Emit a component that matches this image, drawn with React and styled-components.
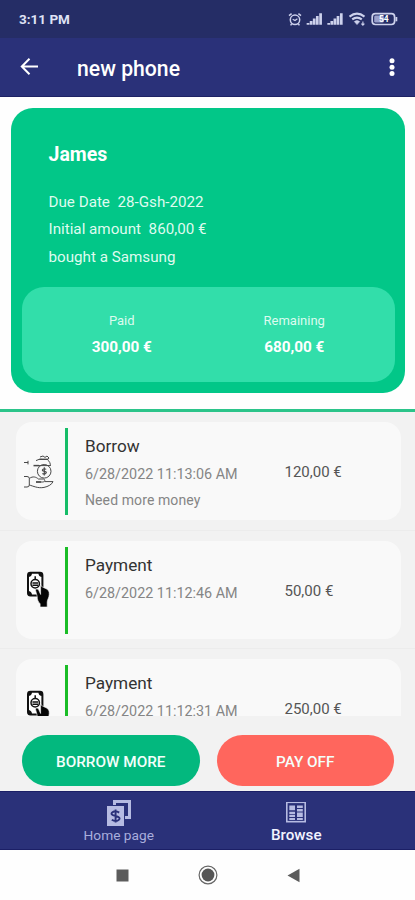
import styled, { createGlobalStyle, css } from 'styled-components';

const GlobalStyle = createGlobalStyle`
   * {
      box-sizing: border-box;
   }

   body {
      margin: 0;
      background: #fff;
      font-family: Roboto, 'Liberation Sans', sans-serif;
   }
`;

const Screen = styled.div`
   display: flex;
   flex-direction: column;
   width: 415px;
   height: 900px;
   overflow: hidden;
   background: #fefefe;
`;

const StatusBar = styled.div`
   display: flex;
   justify-content: space-between;
   height: 38px;
   padding: 12px 16px 0 19px;
   background: #252d66;
   color: #dfe2f5;
`;

const Clock = styled.span`
   font-size: 13.5px;
   font-weight: 700;
   line-height: 15px;
`;

const StatusIcons = styled.svg`
   width: 112px;
   height: 16px;
`;

const Header = styled.header`
   display: flex;
   align-items: center;
   height: 59px;
   padding: 0 20px 0 20px;
   background: #2a3179;
   border-bottom: 1px solid #1e2264;
   color: #fff;
`;

const Title = styled.h1`
   flex: 1;
   margin: 3px 0 0 38px;
   font-size: 21.2px;
   font-weight: 500;
   line-height: 24px;
`;

const Icon = styled.svg`
   display: block;
   flex: none;
   width: ${(props) => props.$w}px;
   height: ${(props) => props.$h}px;
`;

const Summary = styled.section`
   height: 315px;
   padding: 11px 10px 0 11px;
   border-bottom: 3px solid #2bc48a;
`;

const SummaryCard = styled.div`
   height: 284.5px;
   padding: 35px 10.5px 0;
   border-radius: 22px;
   background: #02c788;
   color: #fff;
`;

const Name = styled.h2`
   margin: 0 0 23px 27px;
   font-size: 19.5px;
   font-weight: 700;
   line-height: 23px;
`;

const Detail = styled.p`
   margin: 0 0 0 27px;
   font-size: 15.2px;
   line-height: 27.3px;
   color: #dffbef;
   white-space: pre;
`;

const Totals = styled.div`
   display: flex;
   height: 94.5px;
   margin-top: 16.5px;
   padding: 20.5px 14px 0;
   border-radius: 22px;
   background: #32deaa;
`;

const Total = styled.div`
   flex: 1;
   text-align: center;
`;

const TotalLabel = styled.div`
   font-size: 13px;
   line-height: 26px;
   color: #dcfbef;
`;

const TotalValue = styled.div`
   font-size: 15.3px;
   font-weight: 700;
   line-height: 27px;
`;

const List = styled.ul`
   height: 304px;
   margin: 0;
   padding: 0;
   overflow: hidden;
   list-style: none;
   background: #f2f2f2;
`;

const Item = styled.li`
   height: 118.6px;
   padding: 10px 14px 0 16px;
   border-bottom: 1px solid #ececec;
`;

const ItemCard = styled.div`
   display: flex;
   height: 98px;
   border-radius: 16px;
   background: #f9f9f9;
`;

const Picture = styled.div`
   display: flex;
   align-items: center;
   width: 49px;
   padding-left: ${(props) => props.$left}px;
`;

const Stripe = styled.div`
   width: 3px;
   height: 87px;
   margin: 6px 17px 0 0;
   background: ${(props) => props.$color};
`;

const ItemBody = styled.div`
   width: 199.5px;
   padding-top: 10px;
`;

const ItemTitle = styled.div`
   font-size: 17.2px;
   line-height: 29px;
   color: #333;
`;

const ItemText = styled.div`
   padding-top: 1px;
   font-size: 14.35px;
   line-height: 26px;
   color: #858585;
   ${(props) => props.$note && css`
      padding-top: 0;
      font-size: 14px;
      line-height: 25px;
      letter-spacing: 0.1px;
   `}
`;

const Amount = styled.div`
   padding-top: 37px;
   font-size: 15px;
   line-height: 27px;
   color: #555;
`;

const Actions = styled.div`
   display: flex;
   gap: 17px;
   height: 75px;
   padding: 19px 21px 0 22px;
   background: #f2f2f2;
`;

const ActionButton = styled.button`
   flex: 1;
   height: 51px;
   padding: 2px 0 0;
   border: 0;
   border-radius: 26px;
   background: ${(props) => props.$color};
   color: #f4fffb;
   font-family: inherit;
   font-size: 15.3px;
   font-weight: 500;
`;

const TabBar = styled.nav`
   display: flex;
   justify-content: center;
   height: 59px;
   background: #2a3179;
   border-top: 1px solid #1b1f66;
   border-bottom: 1px solid #1b1f66;
`;

const Tab = styled.a`
   display: flex;
   flex-direction: column;
   align-items: center;
   width: 177.5px;
   padding-top: 7px;
   color: ${(props) => (props.$active ? '#f2f3ff' : '#a9aedd')};
   font-size: ${(props) => (props.$active ? 15.2 : 13.7)}px;
   font-weight: ${(props) => (props.$active ? 500 : 400)};
   line-height: 18px;
`;

const TabIcon = styled.div`
   display: flex;
   align-items: center;
   height: 27px;
`;

const SystemBar = styled.div`
   display: flex;
   justify-content: center;
   align-items: center;
   gap: 69px;
   flex: 1;
   padding-left: 1px;
`;

const StatusGlyphs = () => (
   <StatusIcons viewBox="0 0 112 16" fill="none" stroke="#cdd1ec">
      <circle cx="8" cy="7.8" r="4.7" strokeWidth="1.5" />
      <path d="M2 3.7 4.6 1.7M14 3.7 11.4 1.7M4.6 12 3.6 13.4M11.4 12 12.4 13.4" strokeWidth="1.5" />
      <path d="M5.7 7.2 8 8.6 10.4 6.8" strokeWidth="1.2" />
      {[20, 40.7].map((x) => (
         <path
            key={x}
            d={`M${x + 1} 12.8V11M${x + 4.1} 12.8V9M${x + 7.2} 12.8V6.6M${x + 10.3} 12.8V4M${x + 13.6} 12.8V1.2`}
            strokeWidth="2.7"
         />
      ))}
      <path d="M62.5 4.6Q70 -1.2 77.5 4.6M65.2 7.4Q70 3.7 74.8 7.4" strokeWidth="2.1" />
      <path d="M67.3 9.6Q70 7.4 72.7 9.6L70 12.6Z" fill="#cdd1ec" strokeWidth="0.6" />
      <path d="M75.9 9.5V13M74.4 11.6 75.9 13.2 77.4 11.6" strokeWidth="1.1" />
      <rect x="85.2" y="1.7" width="22.4" height="10.8" rx="3.2" strokeWidth="1.7" />
      <rect x="87.2" y="3.6" width="9.6" height="7" rx="1.4" fill="#9ba1cd" stroke="none" />
      <path d="M109.4 5V9.3" strokeWidth="1.8" />
      <text x="96.8" y="10.2" textAnchor="middle" fontSize="8.5" fontWeight="700" fill="#fff" stroke="none">54</text>
   </StatusIcons>
);

const BorrowIcon = () => (
   <Icon $w={32} $h={36} viewBox="0 0 32 36" fill="none" stroke="#484848" strokeWidth="1">
      <path d="M1 9.5H5M5 7.8V11.4" />
      <path d="M10.5 12.6H16" strokeWidth="1.5" />
      <path d="M15 12.6H27M13 7.6 16 6.4 18.5 6.3M17 4 20 3 22 4.4 24 3 26 5 24.5 6.8C26.8 8.5 27.4 10.5 27.4 13" />
      <path d="M16.5 6.3H25" strokeWidth="1.4" />
      <circle cx="21.2" cy="18.3" r="6.8" />
      <path d="M23.2 16.4Q21.2 15 19.8 16.4T21.4 18.4 22.8 20.3Q21.2 21.8 19.4 20.5M21.3 14.2V22.6" strokeWidth="1.1" />
      <path d="M1 23.5H4Q6.3 23.5 6.3 25.4V32Q6.3 34 4 34H1M6.3 25.5C10 22.8 13 24 15.4 26H20.5C22.5 26.5 22 29 19.7 29H13M21.5 28.6H30C29 31.5 25 33.6 21 34.4C15 35.6 10 33 6.3 32" />
      <path d="M13 29H18" strokeWidth="1.5" />
   </Icon>
);

const PaymentIcon = () => (
   <Icon $w={24} $h={37} viewBox="0 0 24 37">
      <rect x="2" y="1.8" width="14.4" height="22.6" rx="2.4" fill="#fff" stroke="#111" strokeWidth="2" />
      <path d="M2 6V2H6A4 4 0 0 1 2 6ZM16.4 6V2H12.4A4 4 0 0 0 16.4 6ZM2 20V24.5H6A4 4 0 0 0 2 20Z" fill="#111" />
      <circle cx="9.2" cy="12.8" r="4.2" fill="none" stroke="#111" strokeWidth="1.5" />
      <path d="M6.4 12H12M6.4 14.3H12M9.2 5.3V8" stroke="#111" strokeWidth="1.5" />
      <path d="M9.6 19.4C9.4 17.8 11.8 17.4 12.6 19L14.6 23.5V14.5L16.8 16.2 20.2 17.8C22.6 19 23.4 20.6 23.2 23.5 23.2 26.8 21.2 28.6 21.2 31V36H14.1V32.8C11.8 30.5 11.2 28 11.2 25.4Z" fill="#050505" stroke="#f9f9f9" strokeWidth="0.6" />
   </Icon>
);

const icons = {
   Borrow: <BorrowIcon />,
   Payment: <PaymentIcon />,
};

const movements = [
   { type: 'Borrow', date: '6/28/2022 11:13:06 AM', note: 'Need more money', amount: '120,00 €', color: '#16bd68', left: 7 },
   { type: 'Payment', date: '6/28/2022 11:12:46 AM', amount: '50,00 €', color: '#1bbd27', left: 10 },
   { type: 'Payment', date: '6/28/2022 11:12:31 AM', amount: '250,00 €', color: '#1bbd27', left: 10 },
];

const Movement = ({ type, date, note, amount, color, left }) => (
   <Item>
      <ItemCard>
         <Picture $left={left}>{icons[type]}</Picture>
         <Stripe $color={color} />
         <ItemBody>
            <ItemTitle>{type}</ItemTitle>
            <ItemText>{date}</ItemText>
            {note && <ItemText $note>{note}</ItemText>}
         </ItemBody>
         <Amount>{amount}</Amount>
      </ItemCard>
   </Item>
);

const App = () => {
   return (
      <Screen>
         <GlobalStyle />
         <StatusBar>
            <Clock>3:11 PM</Clock>
            <StatusGlyphs />
         </StatusBar>
         <Header>
            <Icon $w={19} $h={18} viewBox="0 0 19 18" fill="none" stroke="#fff" strokeWidth="2">
               <path d="M18 8.5H2M9.5 0.8 1.8 8.5 9.5 16.2" />
            </Icon>
            <Title>new phone</Title>
            <Icon $w={6} $h={20} viewBox="0 0 6 20" fill="#fff">
               <circle cx="3" cy="3.8" r="2.5" />
               <circle cx="3" cy="10.2" r="2.5" />
               <circle cx="3" cy="16.6" r="2.5" />
            </Icon>
         </Header>
         <Summary>
            <SummaryCard>
               <Name>James</Name>
               <Detail>{'Due Date  28-Gsh-2022'}</Detail>
               <Detail>{'Initial amount  860,00 €'}</Detail>
               <Detail>bought a Samsung</Detail>
               <Totals>
                  <Total>
                     <TotalLabel>Paid</TotalLabel>
                     <TotalValue>300,00 €</TotalValue>
                  </Total>
                  <Total>
                     <TotalLabel>Remaining</TotalLabel>
                     <TotalValue>680,00 €</TotalValue>
                  </Total>
               </Totals>
            </SummaryCard>
         </Summary>
         <List>
            {movements.map((movement) => (
               <Movement key={movement.date} {...movement} />
            ))}
         </List>
         <Actions>
            <ActionButton $color="#03b87e">BORROW MORE</ActionButton>
            <ActionButton $color="#ff665d">PAY OFF</ActionButton>
         </Actions>
         <TabBar>
            <Tab>
               <TabIcon>
                  <Icon $w={24} $h={26} viewBox="0 0 24 26" fill="#b6bbe2">
                     <path d="M6 0H24V19H18V16H21V3H9V5H6Z" />
                     <path d="M0 6H17V26H0Z" />
                     <path d="M12.2 12.6Q8.5 10 5.5 12.3T8.6 16 11.6 20Q8.5 22.2 4.8 19.8M8.6 9.5V22.5" fill="none" stroke="#2a3179" strokeWidth="1.9" />
                  </Icon>
               </TabIcon>
               Home page
            </Tab>
            <Tab $active>
               <TabIcon>
                  <Icon $w={20} $h={21} viewBox="0 0 20 21" fill="#b6bbe2">
                     <rect x="0.8" y="0.3" width="18.4" height="19.4" fill="none" stroke="#b6bbe2" strokeWidth="1.6" />
                     <path d="M3.3 3.5H9V8.2H3.3ZM11 3.5H16.8V6H11ZM11 7H16.8V9.4H11ZM3.3 9.8H9V12.2H3.3ZM3.3 13H9V15H3.3ZM11 10.4H16.8V15H11ZM3.3 16H9V18H3.3ZM11 16H16.8V18H11Z" />
                  </Icon>
               </TabIcon>
               Browse
            </Tab>
         </TabBar>
         <SystemBar>
            <Icon $w={13} $h={13} viewBox="0 0 13 13">
               <rect x="0.5" y="0.5" width="12" height="12" fill="#5c5c5c" />
            </Icon>
            <Icon $w={20} $h={20} viewBox="0 0 20 20">
               <circle cx="10" cy="10" r="8.9" fill="none" stroke="#666" strokeWidth="1.2" />
               <circle cx="10" cy="10" r="6.4" fill="#555" />
            </Icon>
            <Icon $w={13} $h={15} viewBox="0 0 13 15">
               <path d="M0.5 7.5 12.5 0.8V14.2Z" fill="#5c5c5c" />
            </Icon>
         </SystemBar>
      </Screen>
   );
};

export default App;
